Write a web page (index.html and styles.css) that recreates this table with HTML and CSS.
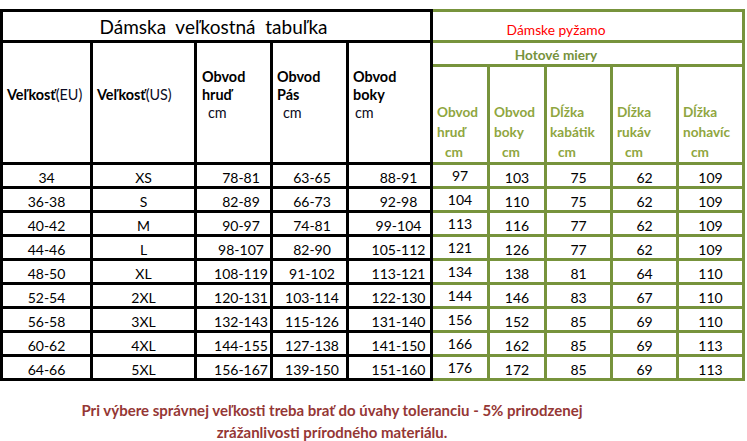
FILE: index.html
```html
<!DOCTYPE html>
<html lang="sk">
<head>
<meta charset="utf-8">
<title>Dámska veľkostná tabuľka</title>
<link rel="stylesheet" href="styles.css">
</head>
<body>
<table class="sizes">
  <colgroup>
    <col class="c1"><col class="c2"><col class="c3"><col class="c4"><col class="c5">
    <col class="c6"><col class="c7"><col class="c8"><col class="c9"><col class="c10">
  </colgroup>
  <tr class="r-title">
    <td colspan="5" class="k first title">Dámska&nbsp; veľkostná&nbsp; tabuľka</td>
    <td colspan="5" class="g pyz">Dámske pyžamo</td>
  </tr>
  <tr class="r-sub">
    <td rowspan="2" class="k first hd"><b>Veľkosť</b>(EU)</td>
    <td rowspan="2" class="k hd"><b>Veľkosť</b>(US)</td>
    <td rowspan="2" class="k hd hd3"><b>Obvod<br>hruď</b><br><span class="cm">cm</span></td>
    <td rowspan="2" class="k hd"><b>Obvod<br>Pás</b><br><span class="cm">cm</span></td>
    <td rowspan="2" class="k hd"><b>Obvod<br>boky</b><br><span class="cm cm-s">cm</span></td>
    <td colspan="5" class="g hot">Hotové miery</td>
  </tr>
  <tr class="r-head">
    <td class="g gh">Obvod<br>hruď<br><span class="gcm">cm</span></td>
    <td class="g gh">Obvod<br>boky<br><span class="gcm">cm</span></td>
    <td class="g gh gh3">Dĺžka<br>kabátik<br><span class="gcm">cm</span></td>
    <td class="g gh">Dĺžka<br>rukáv<br><span class="gcm">cm</span></td>
    <td class="g gh">Dĺžka<br>nohavíc<br><span class="gcm">cm</span></td>
  </tr>
  <tr class="r-data"><td class="k first">34</td><td class="k">XS</td><td class="k d3">78-81</td><td class="k d4">63-65</td><td class="k d5">88-91</td><td class="g d6">97</td><td class="g">103</td><td class="g">75</td><td class="g">62</td><td class="g">109</td></tr>
  <tr class="r-data"><td class="k first">36-38</td><td class="k">S</td><td class="k d3">82-89</td><td class="k d4">66-73</td><td class="k d5">92-98</td><td class="g d6">104</td><td class="g">110</td><td class="g">75</td><td class="g">62</td><td class="g">109</td></tr>
  <tr class="r-data"><td class="k first">40-42</td><td class="k">M</td><td class="k d3">90-97</td><td class="k d4">74-81</td><td class="k d5">99-104</td><td class="g d6">113</td><td class="g">116</td><td class="g">77</td><td class="g">62</td><td class="g">109</td></tr>
  <tr class="r-data"><td class="k first">44-46</td><td class="k">L</td><td class="k d3">98-107</td><td class="k d4">82-90</td><td class="k d5">105-112</td><td class="g d6">121</td><td class="g">126</td><td class="g">77</td><td class="g">62</td><td class="g">109</td></tr>
  <tr class="r-data"><td class="k first">48-50</td><td class="k">XL</td><td class="k d3">108-119</td><td class="k d4">91-102</td><td class="k d5">113-121</td><td class="g d6">134</td><td class="g">138</td><td class="g">81</td><td class="g">64</td><td class="g">110</td></tr>
  <tr class="r-data"><td class="k first">52-54</td><td class="k">2XL</td><td class="k d3">120-131</td><td class="k d4">103-114</td><td class="k d5">122-130</td><td class="g d6">144</td><td class="g">146</td><td class="g">83</td><td class="g">67</td><td class="g">110</td></tr>
  <tr class="r-data"><td class="k first">56-58</td><td class="k">3XL</td><td class="k d3">132-143</td><td class="k d4">115-126</td><td class="k d5">131-140</td><td class="g d6">156</td><td class="g">152</td><td class="g">85</td><td class="g">69</td><td class="g">110</td></tr>
  <tr class="r-data"><td class="k first">60-62</td><td class="k">4XL</td><td class="k d3">144-155</td><td class="k d4">127-138</td><td class="k d5">141-150</td><td class="g d6">166</td><td class="g">162</td><td class="g">85</td><td class="g">69</td><td class="g">113</td></tr>
  <tr class="r-data"><td class="k first">64-66</td><td class="k">5XL</td><td class="k d3">156-167</td><td class="k d4">139-150</td><td class="k d5">151-160</td><td class="g d6">176</td><td class="g">172</td><td class="g">85</td><td class="g">69</td><td class="g">113</td></tr>
</table>
<p class="note">Pri výbere správnej veľkosti treba brať do úvahy toleranciu - 5% prirodzenej<br>zrážanlivosti prírodného materiálu.</p>
</body>
</html>
```
FILE: styles.css
```css
html, body {
  margin: 0;
  padding: 0;
  background: #fff;
}
body {
  font-family: Lato, "Open Sans", "Liberation Sans", sans-serif;
  font-size: 14px;
  color: #000;
}
.sizes {
  margin: 9px 0 0 0;
  width: 745px;
  table-layout: fixed;
  border-collapse: separate;
  border-spacing: 0;
}
.c1 { width: 93px; }
.c2 { width: 104px; }
.c3 { width: 76px; }
.c4 { width: 76px; }
.c5 { width: 84px; }
.c6 { width: 57px; }
.c7 { width: 57px; }
.c8 { width: 66px; }
.c9 { width: 66px; }
.c10 { width: 66px; }

.sizes td {
  box-sizing: border-box;
  padding: 0;
  border-right: 3px solid;
  border-bottom: 3px solid;
  white-space: nowrap;
}
.sizes td.k { border-color: #000; }
.sizes td.g { border-color: #77933c; }
.sizes td.first { border-left: 3px solid #000; }
.r-title td { border-top: 3px solid; }

.r-title { height: 34px; }
.r-sub { height: 24px; }
.r-head { height: 98px; }
.r-data { height: 24px; }

.title {
  text-align: center;
  vertical-align: middle;
  font-size: 19px;
  padding-top: 1px !important;
  padding-right: 6px !important;
}
.pyz {
  text-align: center;
  vertical-align: bottom;
  color: #ff0000;
  font-size: 13.8px;
  padding-right: 63px !important;
  padding-bottom: 2px !important;
  line-height: 17px;
}
.hot {
  text-align: center;
  vertical-align: middle;
  color: #76923c;
  font-weight: bold;
  font-size: 13.6px;
  padding-right: 63px !important;
  padding-top: 3px !important;
  line-height: 17px;
}
.hd {
  vertical-align: middle;
  text-align: left;
  font-size: 14.4px;
  line-height: 18px;
  padding: 0 0 15px 4px !important;
  color: #0c0c24;
}
.hd b { color: #000; }
.hd3 { padding-left: 5px !important; }
.cm { display: inline-block; margin-left: 6px; }
.cm-s { margin-left: 2px; }

.gh {
  vertical-align: bottom;
  text-align: left;
  font-size: 13.6px;
  line-height: 20px;
  font-weight: bold;
  color: #8fa640;
  padding: 0 0 0 4px !important;
}
.gh3 { padding-left: 3px !important; }
.gcm { display: inline-block; margin-left: 8px; }

.r-data td {
  text-align: center;
  vertical-align: middle;
  line-height: 17px;
  padding-top: 3px;
}
.r-data td.d3 { padding-left: 15px; }
.r-data td.d4 { padding-left: 5px; }
.r-data td.d5 { padding-left: 18px; }
.r-data td.d6 { padding-top: 0; }

.note {
  width: 664px;
  margin: 18px 0 0 0;
  text-align: center;
  color: #953735;
  font-weight: bold;
  font-size: 15px;
  line-height: 22px;
}
```
